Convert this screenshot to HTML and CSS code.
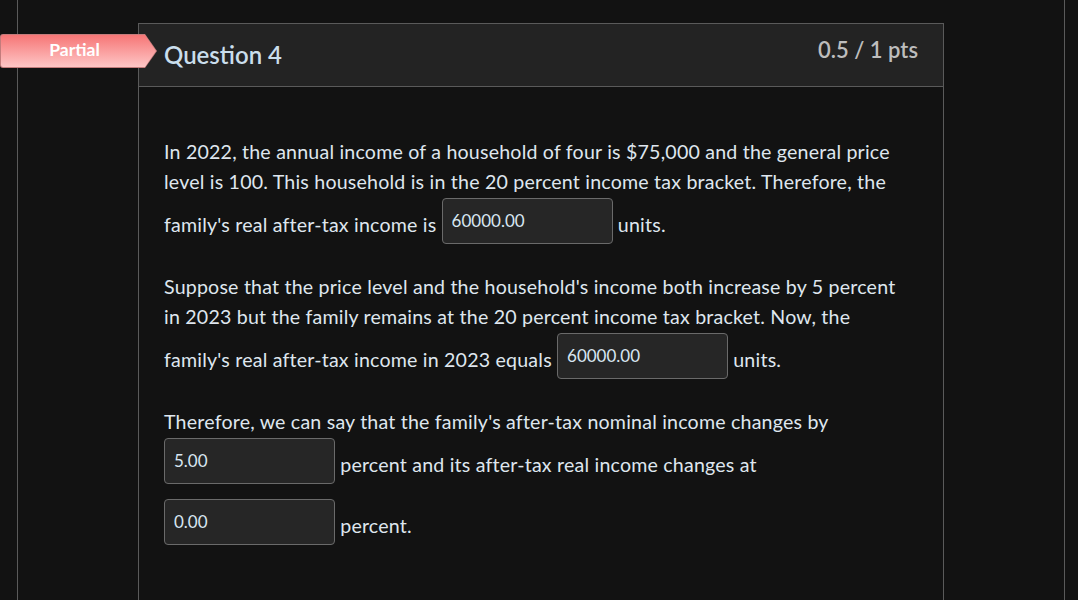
FILE: index.html
```html
<!DOCTYPE html>
<html lang="en">
<head>
<meta charset="utf-8">
<title>Question 4</title>
<link rel="stylesheet" href="styles.css">
</head>
<body>
<div class="page">
  <div class="question">
    <div class="badge"><span>Partial</span></div>
    <div class="question-header">
      <span class="question-name">Question 4</span>
      <span class="question-points">0.5 / 1 pts</span>
    </div>
    <div class="question-body">
      <p>In 2022, the annual income of a household of four is $75,000 and the general price level is 100. This household is in the 20 percent income tax bracket. Therefore, the family's real after-tax income is <input class="answer" type="text" value="60000.00" readonly> units.</p>
      <p>Suppose that the price level and the household's income both increase by 5 percent in 2023 but the family remains at the 20 percent income tax bracket. Now, the family's real after-tax income in 2023 equals <input class="answer" type="text" value="60000.00" readonly> units.</p>
      <p>Therefore, we can say that the family's after-tax nominal income changes by <input class="answer" type="text" value="5.00" readonly> percent and its after-tax real income changes at <input class="answer" type="text" value="0.00" readonly> percent.</p>
    </div>
  </div>
</div>
</body>
</html>
```

FILE: styles.css
```css
html, body {
  margin: 0;
  padding: 0;
  background: #121212;
  height: 600px;
  overflow: hidden;
}

body {
  font-family: Lato, "Open Sans", "Liberation Sans", sans-serif;
  color: #dfe6ee;
}

.page {
  margin: 0 13px 0 17px;
  border-left: 1px solid #5a5a5a;
  border-right: 1px solid #5a5a5a;
  min-height: 600px;
  padding-top: 23px;
  box-sizing: border-box;
}

.question {
  position: relative;
  margin-left: 120px;
  width: 806px;
  box-sizing: border-box;
  border: 1px solid #5a5a5a;
  border-bottom: none;
  min-height: 620px;
}

.badge {
  position: absolute;
  left: -139px;
  top: 10px;
  width: 157px;
  height: 34px;
  background: #c47c7c;
  clip-path: polygon(0 0, 145px 0, 157px 17px, 145px 34px, 0 34px);
  border-radius: 3px 0 0 3px;
}

.badge span {
  position: absolute;
  inset: 1px;
  clip-path: polygon(0 0, 144px 0, 155px 16px, 144px 32px, 0 32px);
  background: linear-gradient(#f67676, #fec6c6);
  border-radius: 2px 0 0 2px;
  color: #ffffff;
  font-size: 17.5px;
  font-weight: 700;
  display: flex;
  align-items: center;
  justify-content: center;
  padding-right: 8px;
  padding-bottom: 3px;
  box-sizing: border-box;
}

.question-header {
  height: 62px;
  background: #232323;
  border-bottom: 1px solid #5a5a5a;
  padding: 0 25px;
  display: flex;
  justify-content: space-between;
  align-items: flex-start;
}

.question-name {
  font-size: 24px;
  font-weight: 600;
  color: #cadeec;
  padding-top: 16px;
}

.question-points {
  font-size: 22px;
  font-weight: 600;
  color: #bdbdbd;
  padding-top: 12px;
}

.question-body {
  padding: 50px 30px 0 25px;
}

.question-body p {
  font-size: 19.6px;
  letter-spacing: 0.2px;
  line-height: 30px;
  margin: 0 0 14px 0;
}

.answer {
  width: 171px;
  height: 46px;
  box-sizing: border-box;
  background: #262626;
  border: 1px solid #6a6a6a;
  border-radius: 4px;
  color: #d8e6f2;
  font-family: Lato, "Open Sans", "Liberation Sans", sans-serif;
  font-size: 17px;
  letter-spacing: 0;
  padding: 11px 9px 12px 9px;
  margin: 1px 0 14px 0;
  vertical-align: 5px;
  outline: none;
}
```
